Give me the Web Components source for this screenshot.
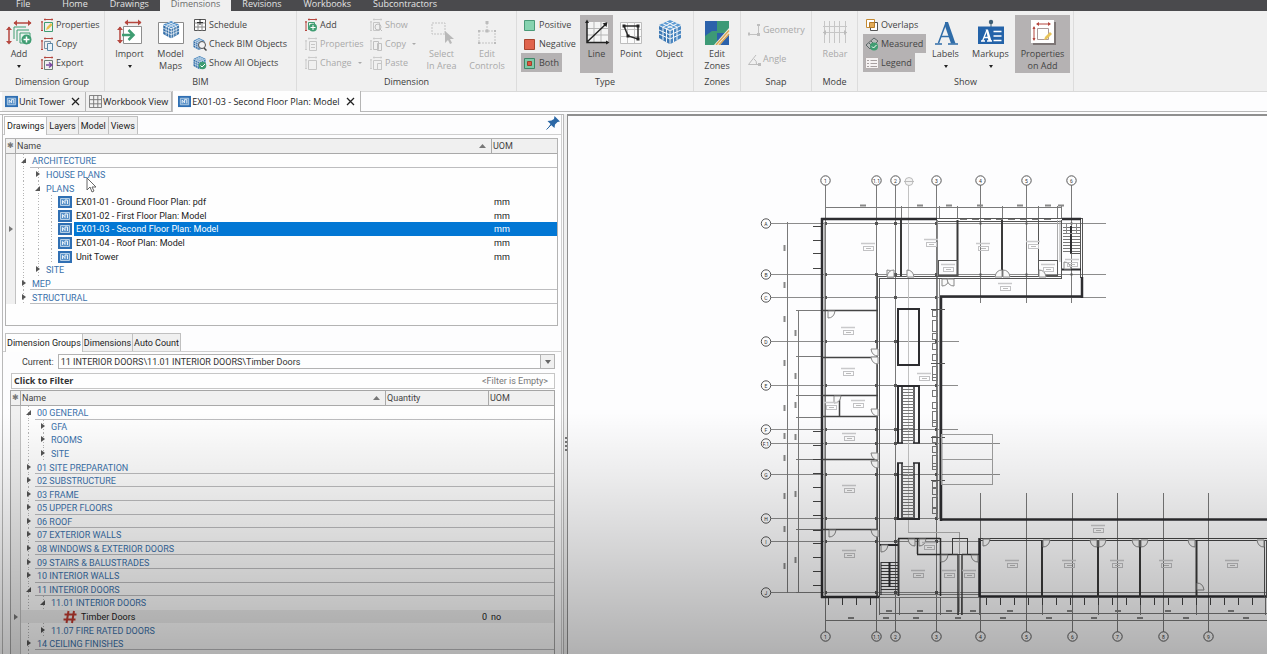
<!DOCTYPE html>
<html lang="en">
<head>
<meta charset="utf-8">
<title>Second Floor Plan</title>
<style>
  html, body { margin: 0; height: 100%; }
  body { font: 9px/12px "Open Sans", "Noto Sans", sans-serif; color: #3c3c3c; background: #fdfdfe; overflow: hidden; }
</style>
</head>
<body>
<take-off-app></take-off-app>

<script>
const BLUE = '#2f6ca8', RED = '#b5473f', GREEN = '#3f9d72';
const svg = (box, body) => `<svg viewBox="0 0 ${box} ${box}" width="${box}" height="${box}" fill="none" aria-hidden="true">${body}</svg>`;
const redRule = c => `<path d="M4 1.5h9M2 3v10M5 .5v2M12 .5v2M1 4h2M1 12.5h2" stroke="${c}"/>`;
const cube = (x, y, s, a, b, c) => `<g transform="translate(${x} ${y}) scale(${s})">
  <path d="M12 0L23 5 12 10 1 5z" fill="${a}"/><path d="M1 6l10.500 5v13L1 18z" fill="${b}"/><path d="M23 6l-10.500 5v13L23 18z" fill="${c}"/>
  <path d="M4.500 3.500L15.500 8.500v14M8 1.800L19 7v13M19.500 3.500L8.500 8.500v14M16 1.800L5 7v13M1 10l11 5 11-5M1 14l11 5 11-5" stroke="#f4f7fa" stroke-width="1"/></g>`;

const ICONS = {
  /* large, 26px */
  addGroup: svg(26, `<path d="M8 4h17M3 8v16" stroke="${RED}" stroke-width="1.500"/><path d="M11 1L7.500 4 11 7zM22 1l3.500 3L22 7zM0 11l3-3.500L6 11zM0 22l3 3.500L6 22z" fill="${RED}"/><path d="M8 20V8h12M11 22V11h12" stroke="${GREEN}"/><path d="M14 24V14h10v10z" fill="#e9f5ef" stroke="${GREEN}"/><circle cx="20.500" cy="20.500" r="5" fill="${GREEN}"/><path d="M20.500 17.500v6M17.500 20.500h6" stroke="#fff" stroke-width="1.500"/>`),
  import: svg(26, `<path d="M6.500 7.500h18v17h-18z" fill="#fff" stroke="#8e8e8e"/><path d="M8 3.500h16M3 8v16" stroke="${RED}" stroke-width="1.500"/><path d="M11 .5l-3.500 3L11 6.500zM21 .5l3.500 3-3.500 3zM0 11l3-3.500L6 11zM0 21l3 3.500L6 21z" fill="${RED}"/><path d="M5 16h10M11.500 11l5 5-5 5" stroke="${GREEN}" stroke-width="2.500"/>`),
  maps: svg(26, `<path d="M.5 3.500h25v21H.5z" fill="#fff" stroke="#8b8b8b"/>${cube(4.500, 2, .72, '#4f8fc9', '#2f6ca8', '#4179ad')}`),
  select: svg(26, `<path d="M3 4h13v11H3z" stroke="#c2c2c2" stroke-dasharray="2 1"/><path d="M16 12v12l3-3 2 4 2-1-2-4h4z" fill="#b9b9b9"/>`),
  controls: svg(26, `<path d="M5 12h16v12H5zM13 12V3" stroke="#c2c2c2" stroke-dasharray="2 1"/><path d="M11.500 2h3v3h-3zM11.500 10.500h3v3h-3zM4 11h2v2H4zM20 11h2v2h-2zM4 23h2v2H4zM20 23h2v2h-2z" fill="#bcbcbc"/>`),
  line: svg(26, `<path d="M3 3h21v20H3z" fill="#f4f4f4"/><path d="M10 3v20M17 3v20M3 9.500h21M3 16h21" stroke="#b5b5b5"/><path d="M3 2v21.500h21M3 23L22 5" stroke="#222" stroke-width="1.500"/><path d="M1 4l2-3.500L5 4zM22 21.500l3.500 2-3.500 2zM23.500 3l-1 5-4-3.500z" fill="#222"/>`),
  point: svg(26, `<path d="M2.500 3.500h21v21h-21z" fill="#fbfbfb" stroke="#bdbdbd"/><path d="M9.500 3v21M16.500 3v21M2 10.500h21M2 17.500h21" stroke="#c4c4c4"/><path d="M6 7h14v13l-10-3z" stroke="#2c2c2c" stroke-width="1.500"/><path d="M4.500 5.500h3v3h-3zM18.500 5.500h3v3h-3zM18.500 18.500h3v3h-3zM8.500 15.500h3v3h-3z" fill="#222"/>`),
  object: svg(26, cube(1, 1, 1, '#5c9ad2', '#3c78b4', '#4a86c0')),
  zones: svg(26, `<path d="M1 2h24v24H1z" fill="#3d9a76"/><path d="M1 2h12v10H8l-7 5z" fill="#2c62ab"/><path d="M13 14h12v12H13z" fill="#2c62ab"/><path d="M10 26L25 9v6L16 26z" fill="#f4f0e2"/><path d="M12 26L25 11.500M15 26l10-11" stroke="#d9a657" stroke-width="1.500"/>`),
  rebar: svg(26, `<path d="M2.500 2v22M7.500 2v22M12.500 2v22M17.500 2v22M23.500 2v22M1 7.500h24M1 13.500h24" stroke="#c6c6c6"/><path d="M4 11l-3 2.500L4 16zM22 11l3 2.500-3 2.500z" fill="#bbb"/>`),
  labels: svg(26, `<path d="M2 25h7M15 25h10M5.500 24L13 4" stroke="${BLUE}" stroke-width="1.500"/><path d="M12 3h3l7.500 21.500h-4.500L12 7z" fill="${BLUE}"/><path d="M8 17.500h9" stroke="${BLUE}" stroke-width="1.500"/>`),
  markups: svg(26, `<circle cx="13" cy="3" r="2.200" fill="#3d5e75"/><path d="M13 4v5" stroke="#3d5e75"/><path d="M0 7.500h26V25H0z" fill="#2463a9"/><path d="M3 22h4M9 22h5M4.500 22L9 11" stroke="#fff" stroke-width="1.300"/><path d="M7.500 10.500h2.500l3.500 11.500h-3L8.500 13z" fill="#fff"/><path d="M6 18.500h5M15.500 12.500h8M15.500 17h8M15.500 21.500h8" stroke="#fff" stroke-width="1.500"/>`),
  onAdd: svg(26, `<path d="M3 3h24v24H3z" fill="#7d7676"/><path d="M1 1h23v23H1z" fill="#fff"/><path d="M7.500 9.500h11v11h-11z" stroke="#a99"/><path d="M7 5h13M4 8v13" stroke="${RED}"/><path d="M9 3L6 5l3 2zM18 3l3 2-3 2zM2.500 10L4 7l1.500 3zM2.500 19L4 22l1.500-3z" fill="${RED}"/><path d="M14 21l1-3 5-5 2 2-5 5z" fill="#e8c45b"/>`),
  /* small, 14px */
  props: svg(14, `${redRule(RED)}<path d="M4.500 4.500h8v9h-8z" stroke="${GREEN}"/><path d="M6 12l1-3 4-4 1.500 2-4 4z" fill="#e4c24b"/>`),
  copy: svg(14, `${redRule(RED)}<path d="M4.500 4.500h6v7h-6z" stroke="#7b8fa0"/><path d="M7.500 6.500h5v7h-5z" fill="#eaf3f8" stroke="#5a88a8"/>`),
  export: svg(14, `${redRule(RED)}<path d="M4.500 4.500h8v9h-8z" stroke="#6c7f76"/><path d="M6 9h5M9 6.500L12 9l-3 2.500" stroke="#7b4aa0" stroke-width="1.500"/>`),
  schedule: svg(14, `<path d="M1.500 1.500h11v11h-11z" fill="#fff" stroke="#555"/><path d="M1.500 5h11M1.500 9h11M5 5v8M9 5v8" stroke="#888"/><path d="M7 1v6M4 4.500h6" stroke="#333"/>`),
  check: svg(14, `${cube(0, 1, .5, '#4a87bd', '#2f6ca8', '#3a7bb4')}<circle cx="9" cy="8" r="3.500" fill="#f3f3f3" stroke="#555"/><path d="M11 11l2.500 2.500" stroke="#444" stroke-width="1.500"/>`),
  showAll: svg(14, `${cube(0, 0, .55, '#4a87bd', '#2f6ca8', '#3a7bb4')}<circle cx="9.500" cy="9.500" r="3.800" fill="${GREEN}"/><path d="M7.500 9.500l1.500 1.500L12 8" stroke="#fff"/>`),
  add: svg(14, `${redRule(RED)}<path d="M4.500 4.500h6v7h-6z" stroke="${GREEN}"/><circle cx="9" cy="9.500" r="4" fill="${GREEN}"/><path d="M9 7v5M6.500 9.500h5" stroke="#fff"/>`),
  propsOff: svg(14, `${redRule('#cbcbcb')}<path d="M5.500 4.500h7v9h-7zM7 7.500h4M7 10.500h4" stroke="#c6c6c6"/>`),
  changeOff: svg(14, `${redRule('#cbcbcb')}<path d="M4.500 4.500h8v9h-8z" stroke="#c6c6c6"/>`),
  showOff: svg(14, `${redRule('#cbcbcb')}<path d="M4.500 4.500h6v8h-6z" stroke="#c6c6c6"/><circle cx="9" cy="9" r="3" stroke="#bbb"/><path d="M11 11l2 2" stroke="#bbb"/>`),
  copyOff: svg(14, `${redRule('#cbcbcb')}<path d="M4.500 4.500h5v8h-5zM8.500 6.500h4v7h-4z" stroke="#c0c0c0"/>`),
  pasteOff: svg(14, `${redRule('#cbcbcb')}<path d="M4.500 4.500h8v9h-8zM8.500 7.500h4v6h-4z" stroke="#c6c6c6"/>`),
  positive: svg(14, `<path d="M1.500 2.500h10v10h-10z" fill="#86d3b0" stroke="#4a9a78"/>`),
  negative: svg(14, `<path d="M1.500 2.500h10v10h-10z" fill="#e0644d" stroke="#a8452f"/>`),
  both: svg(14, `<path d="M1.500 2.500h10v10h-10z" fill="#7fc9a9" stroke="#3d8767"/><path d="M4.500 5.500h4v4h-4z" fill="#e0573f" stroke="#9c3f2c"/>`),
  geometry: svg(14, `<path d="M1 11.500h11M11.500 2v10" stroke="#c2c2c2"/><path d="M1 9.500h2v3H1zM10 1h3v2h-3zM10 10h3v3h-3z" fill="#bebebe"/>`),
  angle: svg(14, `<path d="M12.500 12.500H1.500L9 3M7 7q3 2 2.500 5" stroke="#bdbdbd"/><path d="M11 11h3v3h-3z" fill="#bbb"/>`),
  overlaps: svg(14, `<path d="M1.500 1.500h8v8h-8z" fill="#fff" stroke="#c48a33"/><path d="M5.500 4.500h7v8h-7z" fill="#fff" stroke="#555"/><path d="M4.500 4.500h5v5h-5z" fill="#e2ab58" stroke="#b57c2a"/>`),
  measured: svg(14, `<path d="M1 8l8-7 4 3-8 8z" fill="#b9bcbc" stroke="#5c6666"/><path d="M4 6l2 2M6 4l2 2" stroke="#5c6666"/><circle cx="9" cy="9.500" r="4" fill="${GREEN}"/><path d="M7 9.500l1.500 1.500L11.500 8" stroke="#fff"/>`),
  legend: svg(14, `<path d="M.5 1.500h13v11H.5z" fill="#f6f3f3" stroke="#b5afaf"/><path d="M2 4.500h2M2 7.500h2M2 10.500h2M5.500 4.500H12M5.500 7.500H12M5.500 10.500H12" stroke="#a7a0a0"/>`),
  drawing: svg(14, `<path d="M0 1h14v12H0z" fill="#2f6fb3"/><path d="M2.500 3.500h9v7h-9z" fill="#5c93c9" stroke="#b5cfe6"/><path d="M4.500 9V5.500L7 8.500V5h2.500v4" stroke="#e9f1f8"/>`),
  workbook: svg(14, `<path d="M.5 .5h13v13H.5zM5 .5v13M9.500 .5v13M.5 5h13M.5 9.500h13" stroke="#777"/>`),
  count: svg(14, `<path d="M5.500 1L3.500 13M11 1L9 13M1.500 4.500h12M.5 9.500h12" stroke="#c03a30" stroke-width="2"/>`),
  pin: svg(14, `<path d="M8.500 0l5.500 5.500-2.500 .5-2.500 2.500-.5 3.500-3.500-3L1 13.500 4.500 8l-3-3 4-.5L8 3z" fill="#2c68a6"/><path d="M.5 13.500L5 9" stroke="#2c68a6"/>`)
};

/* Registers an element whose shadow root is filled from a template. */
function define(name, markup, setup) {
  customElements.define(name, class extends HTMLElement {
    connectedCallback() {
      if (this.shadowRoot) return;
      const t = document.createElement('template');
      t.innerHTML = typeof markup === 'function' ? markup(this) : markup;
      this.attachShadow({ mode: 'open' }).append(t.content.cloneNode(true));
      if (setup) setup(this);
    }
  });
}

define('menu-tab', el => `<style>
  :host { display: flex; height: 11px; }
  a { padding: 0 11px 3px; line-height: 8px; color: #e4e4e4; text-decoration: none; }
  :host([first]) a { padding: 0 21px 3px 16px; }
  :host([active]) a { background: #f0f0f0; color: #6b6b6b; }
</style><a href="#"><slot></slot></a>`);

define('ribbon-group', el => `<style>
  :host { display: flex; flex-direction: column; justify-content: space-between; box-sizing: border-box; flex: none;
          width: ${el.getAttribute('width')}px; height: 80px; padding: 4px 0 3px; border-right: 1px solid #dcdcdc; }
  .body { display: flex; height: 58px; padding-left: ${el.getAttribute('inset') || 0}px; }
  .caption { text-align: center; }
</style><div class="body"><slot></slot></div><div class="caption">${el.getAttribute('caption')}</div>`);

define('button-stack', el => `<style>
  :host { display: flex; flex-direction: column; align-items: flex-start; flex: none; width: ${el.getAttribute('width')}px; }
  :host([loose]) { justify-content: space-around; }
</style><slot></slot>`);

define('ribbon-button', el => `<style>
  :host { display: block; flex: none; }
  button { display: flex; align-items: center; gap: 2px; margin: 0; border: 0; height: 19px; padding: 0 3px 0 2px;
           background: none; font: inherit; color: #444; white-space: nowrap; }
  :host([large]) button { flex-direction: column; gap: 3px; width: ${el.getAttribute('width')}px; height: 58px; padding: 4px 0 0; }
  :host([disabled]) button { color: #a9a9a9; }
  :host([pressed]) button { background: #b5b2b3; }
  svg { display: block; flex: none; }
  .caret { width: 0; border: 2px solid transparent; border-top-color: currentColor; border-bottom: 0; margin-left: 4px; }
  :host([large]) .caret { margin: 2px 0 0; border-width: 3px 2px 0; color: #222; }
  :host([large]) .text { line-height: 12px; }
</style><button type="button" ${el.hasAttribute('disabled') ? 'disabled' : ''} ${el.hasAttribute('pressed') ? 'aria-pressed="true"' : ''}>
${ICONS[el.getAttribute('icon')]}<span class="text"><slot></slot></span>${el.hasAttribute('menu') ? '<span class="caret"></span>' : ''}</button>`);

define('document-tab', el => `<style>
  :host { display: flex; align-items: center; box-sizing: border-box; flex: none; height: 19px; padding: 0 3px; gap: 4px;
          background: #f1f1f1; border-right: 1px solid #b5b5b5; color: #222; }
  :host([active]) { height: 21px; background: #fefefe; border-left: 1px solid #c2c2c2; padding-left: 5px; }
  a { display: flex; align-items: center; gap: 1px; color: inherit; text-decoration: none; white-space: nowrap; }
  a svg { width: 13px; height: 13px; }
  button { border: 0; padding: 0; background: none; width: 13px; height: 13px; display: grid; place-items: center; }
</style><a href="#">${ICONS[el.getAttribute('icon')]}<span><slot></slot></span></a>
${el.hasAttribute('closable') ? '<button type="button" aria-label="Close"><svg width="9" height="9" viewBox="0 0 9 9"><path d="M1 1l7 7M8 1L1 8" stroke="#222" stroke-width="1.300"/></svg></button>' : ''}`);

define('panel-tabs', el => {
  const names = el.getAttribute('names').split(',');
  return `<style>
  :host { display: flex; align-items: flex-end; height: 18px; padding-left: ${el.getAttribute('inset') || 0}px; border-bottom: 1px solid #cfcfcf; font-family: Roboto, sans-serif; }
  button { box-sizing: border-box; height: 18px; padding: 0 2px; margin: 0; border: 1px solid #c0c0c0; border-width: 1px 1px 0 0; background: #f0f0f0;
           font: inherit; color: #222; }
  :host([tight]) button { padding: 0 1px; }
  button:first-of-type { background: #fefefe; border-left-width: 1px; height: 19px; margin-bottom: -1px; }
  .end { margin-left: auto; align-self: flex-start; padding-right: 1px; }
  .end svg { display: block; }
</style>${names.map((n, i) => `<button type="button" role="tab" aria-selected="${i === 0}">${n}</button>`).join('')}<span class="end">${el.hasAttribute('pin') ? ICONS.pin : ''}</span>`;
});

/* Rows are [level, kind, name, unit, quantity, state]; kind is open, closed, or an icon name. */
const DRAWINGS = [
  [0, 'open', 'ARCHITECTURE'], [1, 'closed', 'HOUSE PLANS'], [1, 'open', 'PLANS'],
  [2, 'drawing', 'EX01-01 - Ground Floor Plan: pdf', 'mm'], [2, 'drawing', 'EX01-02 - First Floor Plan: Model', 'mm'],
  [2, 'drawing', 'EX01-03 - Second Floor Plan: Model', 'mm', '', 'selected'], [2, 'drawing', 'EX01-04 - Roof Plan: Model', 'mm'],
  [2, 'drawing', 'Unit Tower', 'mm'], [1, 'closed', 'SITE'], [0, 'closed', 'MEP'], [0, 'closed', 'STRUCTURAL']
];
const GROUPS = [
  [0, 'open', '00 GENERAL'], [1, 'closed', 'GFA'], [1, 'closed', 'ROOMS'], [1, 'closed', 'SITE'],
  [0, 'closed', '01 SITE PREPARATION'], [0, 'closed', '02 SUBSTRUCTURE'], [0, 'closed', '03 FRAME'], [0, 'closed', '05 UPPER FLOORS'],
  [0, 'closed', '06 ROOF'], [0, 'closed', '07 EXTERIOR WALLS'], [0, 'closed', '08 WINDOWS &amp; EXTERIOR DOORS'],
  [0, 'closed', '09 STAIRS &amp; BALUSTRADES'], [0, 'closed', '10 INTERIOR WALLS'], [0, 'open', '11 INTERIOR DOORS'],
  [1, 'open', '11.01 INTERIOR DOORS'], [2, 'count', 'Timber Doors', 'no', '0', 'current'], [1, 'closed', '11.07 FIRE RATED DOORS'],
  [0, 'closed', '14 CEILING FINISHES'], [0, 'closed', '']
];

define('tree-grid', el => {
  const groups = el.getAttribute('source') === 'groups';
  const rows = groups ? GROUPS : DRAWINGS;
  const twisty = k => k === 'open'
    ? '<svg width="8" height="8" viewBox="0 0 8 8"><path d="M6 1v5H1z" fill="#555"/></svg>'
    : '<svg width="8" height="8" viewBox="0 0 8 8"><path d="M2 0l4 3-4 3z" fill="#555"/></svg>';
  const row = ([level, kind, name, unit = '', qty = '', state = '']) => {
    const leaf = level === 2;
    return `<tr class="l${level} ${state}"><td class="gutter">${state ? '<svg width="4" height="6" viewBox="0 0 4 6"><path d="M0 0l4 3-4 3z" fill="#777"/></svg>' : ''}</td>
    <td class="name"><div>${leaf ? ICONS[kind] : twisty(kind)}<span>${name}</span></div></td>${groups ? `<td class="qty">${qty}</td>` : ''}<td class="unit">${unit}</td></tr>`;
  };
  return `<style>
  :host { display: block; border: 1px solid #a5a5a5; background: #fefefe; font-family: Roboto, sans-serif; }
  table { width: 100%; border-spacing: 0; table-layout: fixed; height: ${groups ? 273 : 165}px; }
  th { box-sizing: border-box; height: 15px; padding: 0 5px 0 1px; background: #f0f0f0; border: solid #a9a9a9; border-width: 0 1px 1px 0; font-weight: normal; text-align: left; color: #444; }
  th:last-child { border-right: 0; }
  th div { display: flex; align-items: center; justify-content: space-between; }
  td { padding: 1px 0 0; line-height: 12px; color: #222; }
  td.gutter { background: #f0f0f0; border-right: 1px solid #c2c2c2; padding-left: 3px; }
  td svg { flex: none; display: block; }
  td.name { color: #3b72ab; --dots: repeating-linear-gradient(#b4b4b4 0 1px, transparent 1px 3px); }
  td.name div { display: flex; align-items: center; gap: 4px; height: 12px; white-space: nowrap; padding-left: 4px; }
  .l0 td.name { background: linear-gradient(#bdbdbf, #bdbdbf) 14px 100% / 100% 1px no-repeat, var(--dots) 7px 0 / 1px 100% no-repeat; }
  .l0 td.unit, .l0 td.qty { background: linear-gradient(#bdbdbf, #bdbdbf) 0 100% / 100% 1px no-repeat; }
  .l1 td.name { background: var(--dots) 7px 0 / 1px 100% no-repeat, var(--dots) 22px 0 / 1px 100% no-repeat; }
  .l1 td.name div { padding-left: 18px; }
  .l2 td.name { color: #222; background: var(--dots) 7px 0 / 1px 100% no-repeat, var(--dots) 22px 0 / 1px 100% no-repeat, var(--dots) 35px 0 / 1px 100% no-repeat; }
  .l2 td.name div { padding-left: 42px; }
  .selected td.name { color: #fff; background: linear-gradient(#0277d4, #0277d4) 58px 0 / 100% 100% no-repeat, var(--dots) 7px 0 / 1px 100% no-repeat, var(--dots) 22px 0 / 1px 100% no-repeat, var(--dots) 35px 0 / 1px 100% no-repeat; }
  .selected td.unit { color: #fff; background: #0277d4; }
  .current td:not(.gutter) { background: #eee; }
  td.unit { padding-left: 2px; }
  td.qty { text-align: right; padding-right: 2px; }
  .star { width: 10px; } .c-unit { width: 65px; } .c-qty { width: 103px; }
  th:first-child { text-align: center; padding: 0; color: #777; font-size: 8px; line-height: 12px; }
</style><table><colgroup><col class="star"><col>${groups ? '<col class="c-qty">' : ''}<col class="c-unit"></colgroup>
<thead><tr><th>✱</th><th><div>Name<svg width="7" height="4" viewBox="0 0 7 4"><path d="M3.500 0L7 4H0z" fill="#777"/></svg></div></th>${groups ? '<th>Quantity</th>' : ''}<th>UOM</th></tr></thead>
<tbody>${rows.map(row).join('')}</tbody></table>`;
});

define('drawings-panel', `<style>
  :host { display: block; padding: 1px 0 0; }
  .box { height: 186px; margin: 3px 3px 0 2px; border: 1px solid #b3b3b3; background: #fefefe; }
  tree-grid { border-width: 0; }
</style><panel-tabs names="Drawings,Layers,Model,Views" inset="1" pin></panel-tabs><div class="box"><tree-grid source="drawings"></tree-grid></div>`);

define('groups-panel', `<style>
  :host { display: block; padding-top: 7px; font-family: Roboto, sans-serif; }
  .current { display: flex; align-items: center; gap: 4px; margin: 2px 6px 0 19px; }
  .pick { flex: 1; position: relative; display: flex; }
  select { flex: 1; box-sizing: border-box; height: 15px; padding: 0 16px 0 2px; border: 1px solid #b3b3b3; border-radius: 0; background: #fefefe; appearance: none; font: inherit; color: #333; }
  .arrow { position: absolute; right: 1px; top: 1px; bottom: 1px; width: 13px; display: grid; place-items: center; background: #f0f0f0; border-left: 1px solid #b3b3b3; pointer-events: none; }
  .filter { box-sizing: border-box; width: calc(100% - 14px); display: flex; align-items: center; justify-content: space-between; height: 16px; margin: 4px 6px 1px 8px; padding: 0 6px 0 2px; border: 1px solid #c6c6c6; background: #fefefe; font: inherit; color: #777; }
  b { font-family: "Open Sans", sans-serif; color: #333; }
  tree-grid { margin: 0 6px 0 7px; }
</style><panel-tabs names="Dimension Groups,Dimensions,Auto Count" inset="2" tight></panel-tabs>
<div class="current"><label for="group">Current:</label><span class="pick"><select id="group"><option>11 INTERIOR DOORS\\11.01 INTERIOR DOORS\\Timber Doors</option></select>
<span class="arrow"><svg width="6" height="4" viewBox="0 0 6 4"><path d="M0 0h6L3 4z" fill="#666"/></svg></span></span></div>
<button type="button" class="filter"><b>Click to Filter</b><span>&lt;Filter is Empty&gt;</span></button>
<tree-grid source="groups"></tree-grid>`);

define('floor-plan', () => {
  let s = '';
  const L = (x1, y1, x2, y2, w = 1, c = '#555') => s += `<path d="M${x1} ${y1}L${x2} ${y2}" stroke="${c}" stroke-width="${w}"/>`;
  const R = (x, y, w, h, sw = 1, c = '#555') => s += `<rect x="${x}" y="${y}" width="${w}" height="${h}" stroke="${c}" stroke-width="${sw}"/>`;
  const H = (y, x1, x2, w, c) => L(x1, y, x2, y, w, c);
  const V = (x, y1, y2, w, c) => L(x, y1, x, y2, w, c);
  const DARK = '#2d2d30', GRID = '#7a7a7a', FAINT = '#aaa';
  const bubble = (x, y, t) => s += `<circle cx="${x}" cy="${y}" r="4.700" fill="#fdfdfe" stroke="#555"/><text x="${x}" y="${y + 2}" text-anchor="middle">${t}</text>`;
  const door = (x, y, dx, dy) => s += `<path d="M${x} ${y}v${7 * dy}q${6 * dx} 0 ${7 * dx} ${-7 * dy}z" fill="#fafafa" stroke="#888"/>`;

  /* structural grid */
  const tops = [[825.5, '1'], [876.5, '1.1'], [895.5, '2'], [936.5, '3'], [980.5, '4'], [1026.5, '5'], [1071.5, '6']];
  tops.forEach(([x], i) => V(x, 185, i < 4 ? 632 : 303, 1, GRID));
  const rows = [[223, 'A', 1106], [274, 'B', 1106], [297, 'C', 1106], [341, 'D', 959], [385, 'E', 958], [429, 'F', 958], [443, 'F.1', 1000], [474, 'G', 1000], [518, 'H', 942], [541, 'I', 980], [592, 'J', 1267]];
  rows.forEach(([y, , x]) => H(y + .5, 771, x, 1, '#8c8c8c'));
  const lows = [[980.5, '4'], [1026.5, '5'], [1072.5, '6'], [1117.5, '7'], [1163.5, '8'], [1208.5, '9']];
  lows.forEach(([x]) => V(x, 493, 632, 1, GRID));
  V(908.5, 185, 532, 1, '#c2c2c2'); H(532.5, 908, 959, 1, '#b5b5b5'); V(959.5, 532, 612, 1, '#aaa');
  for (const [x] of tops.slice(0, 4)) for (const [y] of rows) s += `<rect x="${x - 1.5}" y="${y - 1}" width="3" height="3" fill="#555"/>`;
  for (const [x] of tops.slice(4)) for (const y of [223, 274]) s += `<rect x="${x - 1}" y="${y - .5}" width="2" height="2" fill="#555"/>`;

  /* dimension chains */
  V(787.5, 222, 593, 1, GRID); V(798.5, 310, 593, 1, GRID);
  [310, 356, 395, 417, 459, 529, 592].forEach(y => H(y + .5, 796, 821, 1, GRID));
  H(207.5, 825, 1062, 1, GRID);
  [901.5, 939.5, 957.5, 1002.5, 1038.5, 1057.5, 1061.5].forEach(x => V(x, 206, 219, 1, GRID));
  H(613.5, 879, 1267, 1, GRID); H(620.5, 825, 1267, 1, GRID);
  [879.5, 899.5, 940.5, 958.5, 961.5, 979.5, 1042.5, 1098.5, 1140.5, 1196.5, 1265.5].forEach(x => V(x, 598, 615, 1, GRID));
  const markH = (x, y) => H(y, x - 3, x + 3, 2, '#888'), markV = (x, y) => V(x, y - 3, y + 3, 2, '#888');
  [863, 920, 949, 980, 1020, 1048, 1061].forEach(x => markH(x, 205.5));
  [248, 285, 319, 363, 408, 436, 458, 496, 529, 566].forEach(y => markV(784.5, y));
  [333, 376, 405, 437, 494, 560].forEach(y => markV(795.500, y));
  [889, 920, 949, 973, 1010, 1070, 1118, 1168, 1231].forEach(x => markH(x, 611));
  [851, 886, 916, 958, 1003, 1049, 1094, 1140, 1186, 1246].forEach(x => markH(x, 618));

  /* outer walls */
  V(822, 218, 598, 2.500, DARK); V(824.5, 222, 595, 1, FAINT);
  H(219, 821, 937, 2.500, DARK); H(221.5, 937, 1062, 1); H(218.5, 937, 1082, 1);
  for (let x = 960; x < 1056; x += 12) H(219.5, x, x + 7, 1, '#777');
  H(219, 1062, 1081, 2.500, DARK); V(1080.5, 220, 278); V(1082.5, 218, 278);
  V(1082, 277, 298, 2.500, DARK); H(296.5, 940, 1082, 2.500, DARK);
  V(941, 296, 521, 2.500, DARK); H(519.5, 940, 1267, 2.500, DARK);
  V(937.5, 220, 519, 1, '#888'); V(939.5, 278, 519, 1, '#888');
  H(597, 821, 879, 2.500, DARK); H(594.5, 879, 979, 1, '#888'); H(597.5, 879, 979, 1, '#888'); H(596.5, 979, 1267, 2.500, DARK);
  [226, 240, 253, 268, 431, 445, 459, 473, 487, 501, 515, 530, 543, 557, 571, 585].forEach(y => H(y + .5, 813, 821, 1, '#444'));
  [828, 842, 856, 870].forEach(x => V(x + .5, 598, 605, 1, '#444'));
  for (let x = 986; x < 1260; x += 14) V(x + .5, 598, 605, 1, '#444');

  /* corridors and upper rooms */
  V(877.5, 276, 597, 1); V(879.5, 278, 597, 1); H(276.5, 878, 1062); H(278.5, 880, 1062, 1);
  [901, 957.5, 1002].forEach(x => V(x, 220, 276, 2, '#3a3a3a'));
  V(1038.5, 220, 276); V(1057.5, 220, 276, 1, FAINT); V(1061.5, 220, 278); V(1060, 220, 262, 1, FAINT);
  R(938.5, 260.5, 19, 15); R(1038.5, 260.5, 19, 15);
  for (let y = 227; y < 253; y += 3) H(y + .5, 1063, 1080, 1, '#777');
  V(1071, 226, 253, 2, DARK); R(1066.5, 223.5, 10, 10, 1, '#888'); H(253.5, 1070, 1081, 1); H(269.5, 1062, 1081, 2, DARK);

  /* left rooms */
  [310, 357, 395, 416, 459, 529].forEach(y => H(y + .5, 822, 878, 1.500, '#444'));
  V(839.5, 395, 417, 1.500, '#444');

  /* shaft and stair cores */
  R(898, 309, 21, 56, 2, DARK);
  const core = (y1, y2, cap) => { [898, 919].forEach(x => V(x, y1, y2, 2, DARK)); [902, 914].forEach(x => V(x, y1, y2, 1.500, DARK)); H(cap, 897, 920, 2, DARK);
    [y1, y2].forEach(y => { H(y, 897, 903, 1.500, DARK); H(y, 913, 920, 1.500, DARK); });
    for (let y = y1 + 3; y < y2; y += 3) H(y + .5, 903, 914, 1, '#777'); };
  core(386, 443, 386); core(463, 519, 519);

  /* washroom fittings */
  [310, 320, 333, 343, 354, 366, 374, 390, 402, 411, 420, 436, 446, 455, 463, 481, 488, 497, 507].forEach((y, i) => R(932.5, y + .5, 5, i % 4 === 1 ? 11 : 6, 1, '#777'));
  [309, 363, 437, 480].forEach(y => H(y + .5, 931, 945, 1, '#555'));
  R(941.5, 434.5, 51, 50, 1, '#a0a0a0'); H(459.5, 941, 993, 1, '#a0a0a0');

  /* lower rooms */
  H(545, 880, 898, 2, DARK); V(898.5, 539, 596, 2, '#444'); H(538.5, 898, 940, 1.500, '#333'); V(940.5, 538, 596, 1.500, '#333');
  V(917.5, 538, 554, 1.500, '#333'); H(554.5, 917, 958, 1.500, '#333'); H(554.5, 962, 979, 1.500, '#333'); R(952.5, 538.5, 15, 16, 1, '#444');
  V(958, 554, 615, 1.500, '#444'); V(962, 554, 615, 1.500, '#444'); V(979.5, 538, 597, 2.500, DARK);
  for (let y = 562; y < 590; y += 3) H(y + .5, 881, 898, 1, '#444');
  V(889.5, 562, 587, 2, DARK); V(881, 562, 595, 1, DARK);
  H(538.5, 979, 1267, 1, '#444'); H(540.5, 979, 1267, 1, '#444');
  [1042, 1098, 1140, 1196.5].forEach(x => V(x, 540, 597, 2, '#3a3a3a')); V(1264.5, 540, 597); V(1266.5, 540, 597);

  [[828, 311, 1, 1], [878, 349, -1, 1], [878, 357, -1, 1], [834, 396, 1, 1], [878, 409, -1, 1], [878, 453, -1, 1], [878, 461, -1, 1], [829, 530, 1, 1], [878, 530, -1, 1],
   [887, 277, 1, -1], [894, 277, -1, -1], [907, 277, 1, -1], [942, 279, 1, 1], [954, 279, -1, 1], [1002, 277, -1, -1], [1003, 277, 1, -1], [1039, 277, 1, -1],
   [1064, 269, 1, -1], [881, 545, 1, 1], [915, 539, -1, 1], [919, 539, 1, 1], [941, 555, 1, 1], [978, 555, -1, 1], [983, 539, 1, 1],
   [1043, 540, 1, 1], [1097, 540, -1, 1], [1099, 540, 1, 1], [1139, 540, -1, 1], [1141, 540, 1, 1], [1195, 540, -1, 1], [1264, 540, -1, 1], [1197, 590, 1, -1]].forEach(d => door(...d));

  /* room tags */
  [[868, 246], [931, 242], [983, 246], [1033, 244], [848, 330], [848, 371], [849, 436], [849, 488], [849, 553], [1005, 286], [1012, 563], [1069, 563], [1117, 563],
   [1166, 563], [1232, 563], [1098, 528], [918, 573], [949, 573], [969, 573], [858, 403], [924, 376], [948, 267], [1048, 267], [1072, 262], [831, 405], [929, 545]].forEach(([x, y]) => {
    H(y - 2.5, x - 7, x + 7, 1.500, '#c9c9cb'); R(x - 4.5, y + .5, 10, 4, 1, '#c2c2c4'); H(y + 2.500, x - 2, x + 3, 1, '#bbb'); });

  tops.forEach(([x, t]) => bubble(x, 180.5, t));
  s += '<circle cx="909" cy="181.500" r="4" fill="#f3f3f3" stroke="#bbb"/><path d="M904 181.500h10" stroke="#bbb"/>';
  rows.forEach(([y, t]) => bubble(766, y + .5, t));
  tops.slice(0, 4).concat(lows).forEach(([x, t]) => bubble(x, 636.5, t));
  return `<style>
  :host { display: block; flex: 1; min-width: 0; overflow: hidden; background: #fdfdfe; border: solid #8f8f8f; border-width: 2px 0 0 1px; }
  svg { display: block; }
  text { font: 5px Roboto, sans-serif; fill: #333; stroke: none; }
</style><svg width="699" height="538" viewBox="568 116 699 538" fill="none" role="img" aria-label="Second floor plan">${s}</svg>`;
});

define('take-off-app', `<style>
  :host { display: flex; flex-direction: column; height: 100vh; position: relative; overflow: hidden; }
  nav { display: flex; background: #4a4a4d; flex: none; }
  .ribbon { display: flex; flex: none; background: #f0f0f0; border-bottom: 1px solid #d9d9d9; }
  .documents { display: flex; align-items: flex-end; box-sizing: border-box; height: 20px; flex: none; border-bottom: 1px solid #b9b9b9; padding-left: 2px; }
  .documents document-tab[active] { margin-bottom: -1px; }
  main { display: flex; flex: 1; min-height: 0; padding-top: 2px; }
  aside { box-sizing: border-box; flex: none; width: 564px; padding-left: 0; border: solid #b9b9b9; border-width: 1px 1px 0 0; }
  .inner { margin-left: 2px; border-left: 1px solid #b9b9b9; margin-right: 1px; border-right: 1px solid #cfcfcf; }
  .split { width: 3px; flex: none; background: #f0f0f0; display: grid; place-items: center; }
  .split i { width: 2px; height: 14px; margin-top: 119px; background: repeating-linear-gradient(#777 0 2px, transparent 2px 4px); }
  .shade { position: absolute; inset: 0; pointer-events: none; background: linear-gradient(transparent 63%, rgba(0,0,0,.07) 73%, rgba(0,0,0,.16) 84%, rgba(0,0,0,.3) 100%); }
  .cursor { position: absolute; left: 86px; top: 177px; pointer-events: none; }
</style>
<nav><menu-tab first>File</menu-tab><menu-tab>Home</menu-tab><menu-tab>Drawings</menu-tab><menu-tab active>Dimensions</menu-tab><menu-tab>Revisions</menu-tab><menu-tab>Workbooks</menu-tab><menu-tab>Subcontractors</menu-tab></nav>
<div class="ribbon">
  <ribbon-group caption="Dimension Group" width="105">
    <ribbon-button large width="38" icon="addGroup" menu>Add</ribbon-button>
    <button-stack width="62"><ribbon-button icon="props">Properties</ribbon-button><ribbon-button icon="copy">Copy</ribbon-button><ribbon-button icon="export">Export</ribbon-button></button-stack>
  </ribbon-group>
  <ribbon-group caption="BIM" width="192" inset="4">
    <ribbon-button large width="41" icon="import" menu>Import</ribbon-button>
    <ribbon-button large width="41" icon="maps">Model<br>Maps</ribbon-button>
    <button-stack width="104"><ribbon-button icon="schedule">Schedule</ribbon-button><ribbon-button icon="check">Check BIM Objects</ribbon-button><ribbon-button icon="showAll">Show All Objects</ribbon-button></button-stack>
  </ribbon-group>
  <ribbon-group caption="Dimension" width="220" inset="5">
    <button-stack width="65"><ribbon-button icon="add">Add</ribbon-button><ribbon-button icon="propsOff" disabled>Properties</ribbon-button><ribbon-button icon="changeOff" disabled menu>Change</ribbon-button></button-stack>
    <button-stack width="54"><ribbon-button icon="showOff" disabled>Show</ribbon-button><ribbon-button icon="copyOff" disabled menu>Copy</ribbon-button><ribbon-button icon="pasteOff" disabled>Paste</ribbon-button></button-stack>
    <ribbon-button large width="41" icon="select" disabled>Select<br>In Area</ribbon-button>
    <ribbon-button large width="50" icon="controls" disabled>Edit<br>Controls</ribbon-button>
  </ribbon-group>
  <ribbon-group caption="Type" width="177" inset="4">
    <button-stack width="59"><ribbon-button icon="positive">Positive</ribbon-button><ribbon-button icon="negative">Negative</ribbon-button><ribbon-button icon="both" pressed>Both</ribbon-button></button-stack>
    <ribbon-button large width="33" icon="line" pressed>Line</ribbon-button>
    <ribbon-button large width="36" icon="point">Point</ribbon-button>
    <ribbon-button large width="41" icon="object">Object</ribbon-button>
  </ribbon-group>
  <ribbon-group caption="Zones" width="47"><ribbon-button large width="46" icon="zones">Edit<br>Zones</ribbon-button></ribbon-group>
  <ribbon-group caption="Snap" width="71" inset="4">
    <button-stack width="62" loose><ribbon-button icon="geometry" disabled>Geometry</ribbon-button><ribbon-button icon="angle" disabled>Angle</ribbon-button></button-stack>
  </ribbon-group>
  <ribbon-group caption="Mode" width="46"><ribbon-button large width="46" icon="rebar" disabled>Rebar</ribbon-button></ribbon-group>
  <ribbon-group caption="Show" width="216" inset="5">
    <button-stack width="62"><ribbon-button icon="overlaps">Overlaps</ribbon-button><ribbon-button icon="measured" pressed>Measured</ribbon-button><ribbon-button icon="legend" pressed>Legend</ribbon-button></button-stack>
    <ribbon-button large width="41" icon="labels" menu>Labels</ribbon-button>
    <ribbon-button large width="49" icon="markups" menu>Markups</ribbon-button>
    <ribbon-button large width="55" icon="onAdd" pressed>Properties<br>on Add</ribbon-button>
  </ribbon-group>
</div>
<div class="documents"><document-tab icon="drawing" closable>Unit Tower</document-tab><document-tab icon="workbook">Workbook View</document-tab><document-tab icon="drawing" closable active>EX01-03 - Second Floor Plan: Model</document-tab></div>
<main>
  <aside><div class="inner"><drawings-panel></drawings-panel><groups-panel></groups-panel></div></aside>
  <div class="split"><i></i></div>
  <floor-plan></floor-plan>
</main>
<div class="shade"></div>
<svg class="cursor" width="10" height="17" viewBox="0 0 10 17"><path d="M1 1v12l3-3 2 5 2-1-2-4h4z" fill="#fff" stroke="#666"/></svg>`);
</script>
</body>
</html>
